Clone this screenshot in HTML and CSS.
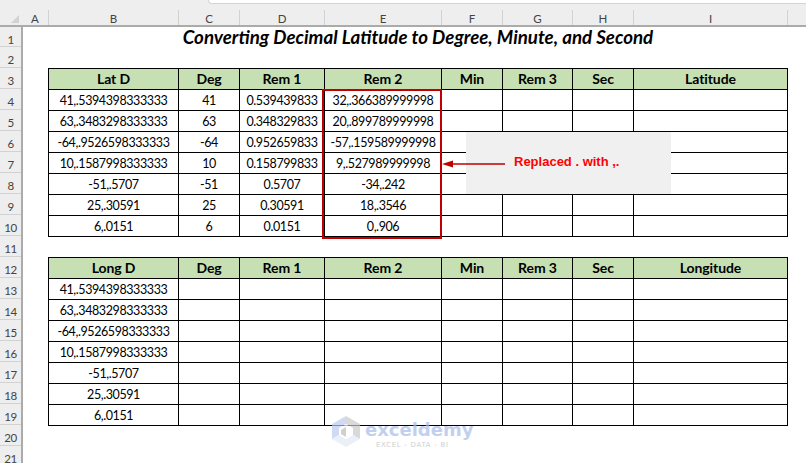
FILE: index.html
```html
<!DOCTYPE html>
<html lang="en">
<head>
<meta charset="utf-8">
<title>Converting Decimal Latitude</title>
<link rel="stylesheet" href="styles.css">
</head>
<body>
<div class="topbar"><div class="formula"></div></div>
<div class="colheads">
  <div class="corner"><svg class="corner-svg" width="22" height="13" viewBox="0 0 22 13"><path class="corner-mark" d="M19 5V13H11Z"/></svg></div>
  <div class="ch a">A</div><div class="ch b">B</div><div class="ch c">C</div><div class="ch d">D</div><div class="ch e">E</div><div class="ch f">F</div><div class="ch g">G</div><div class="ch h">H</div><div class="ch i">I</div>
</div>
<div class="body">
  <div class="rowheads">
    <div class="rh">1</div><div class="rh">2</div><div class="rh">3</div><div class="rh">4</div><div class="rh">5</div><div class="rh">6</div><div class="rh">7</div><div class="rh">8</div><div class="rh">9</div><div class="rh">10</div><div class="rh">11</div><div class="rh">12</div><div class="rh">13</div><div class="rh">14</div><div class="rh">15</div><div class="rh">16</div><div class="rh">17</div><div class="rh">18</div><div class="rh">19</div><div class="rh">20</div><div class="rh">21</div>
  </div>
  <div class="sheet">
    <h1 class="title">Converting Decimal Latitude to Degree, Minute, and Second</h1>
    <table class="data">
      <colgroup><col class="w-b"><col class="w-c"><col class="w-d"><col class="w-e"><col class="w-f"><col class="w-g"><col class="w-h"><col class="w-i"></colgroup>
      <tr class="head"><th>Lat D</th><th>Deg</th><th>Rem 1</th><th>Rem 2</th><th>Min</th><th>Rem 3</th><th>Sec</th><th>Latitude</th></tr>
      <tr><td>41,.5394398333333</td><td>41</td><td>0.539439833</td><td>32,.366389999998</td><td></td><td></td><td></td><td></td></tr>
      <tr><td>63,.3483298333333</td><td>63</td><td>0.348329833</td><td>20,.899789999998</td><td></td><td></td><td></td><td></td></tr>
      <tr><td>-64,.9526598333333</td><td>-64</td><td>0.952659833</td><td>-57,.159589999998</td><td></td><td></td><td></td><td></td></tr>
      <tr><td>10,.1587998333333</td><td>10</td><td>0.158799833</td><td>9,.527989999998</td><td></td><td></td><td></td><td></td></tr>
      <tr><td>-51,.5707</td><td>-51</td><td>0.5707</td><td>-34,.242</td><td></td><td></td><td></td><td></td></tr>
      <tr><td>25,.30591</td><td>25</td><td>0.30591</td><td>18,.3546</td><td></td><td></td><td></td><td></td></tr>
      <tr><td>6,.0151</td><td>6</td><td>0.0151</td><td>0,.906</td><td></td><td></td><td></td><td></td></tr>
    </table>
    <table class="data second">
      <colgroup><col class="w-b"><col class="w-c"><col class="w-d"><col class="w-e"><col class="w-f"><col class="w-g"><col class="w-h"><col class="w-i"></colgroup>
      <tr class="head"><th>Long D</th><th>Deg</th><th>Rem 1</th><th>Rem 2</th><th>Min</th><th>Rem 3</th><th>Sec</th><th>Longitude</th></tr>
      <tr><td>41,.5394398333333</td><td></td><td></td><td></td><td></td><td></td><td></td><td></td></tr>
      <tr><td>63,.3483298333333</td><td></td><td></td><td></td><td></td><td></td><td></td><td></td></tr>
      <tr><td>-64,.9526598333333</td><td></td><td></td><td></td><td></td><td></td><td></td><td></td></tr>
      <tr><td>10,.1587998333333</td><td></td><td></td><td></td><td></td><td></td><td></td><td></td></tr>
      <tr><td>-51,.5707</td><td></td><td></td><td></td><td></td><td></td><td></td><td></td></tr>
      <tr><td>25,.30591</td><td></td><td></td><td></td><td></td><td></td><td></td><td></td></tr>
      <tr><td>6,.0151</td><td></td><td></td><td></td><td></td><td></td><td></td><td></td></tr>
    </table>
    <div class="highlight"></div>
    <div class="callout">Replaced . with ,.</div>
    <svg class="arrow" width="64" height="10" viewBox="0 0 64 10"><path class="arrow-line" d="M8 5H63"/><path class="arrow-head" d="M0 5L11 1.5V8.500Z"/></svg>
    <div class="watermark">
      <svg class="wm-logo" width="28" height="31" viewBox="0 0 28 31">
        <path class="wm-left" d="M14 0L0 8V23L7 19V12L14 8Z"/>
        <path class="wm-right" d="M14 0L28 8V23L21 19V12L14 8Z"/>
        <path class="wm-bottom" d="M0 23L14 31L28 23L21 19L14 23L7 19Z"/>
        <path class="wm-inner" d="M7 12L14 8L21 12V19L14 23L7 19Z"/>
        <path class="wm-notch" d="M9 14L14 11V17L14 21L9 18Z"/>
      </svg>
      <div class="wm-text"><div class="wm-name">exceldemy</div><div class="wm-sub">EXCEL - DATA - BI</div></div>
    </div>
  </div>
</div>
</body>
</html>
```
FILE: styles.css
```css
* { box-sizing: border-box; }
html, body { margin: 0; height: 100%; }
body { width: 806px; height: 463px; overflow: hidden; background: #fff; font-family: Lato, "Liberation Sans", sans-serif; color: #000; }

.topbar { height: 4px; background: #eeeeee; padding-left: 208px; overflow: hidden; }
.formula { height: 4px; background: #fff; border: 1px solid #d4d4d4; border-width: 0 0 1px 1px; border-radius: 0 0 0 5px; }

.colheads { display: flex; height: 23px; padding-top: 6px; background: #eeeeee; border-bottom: 2px solid #ababab; }
.corner { width: 22px; border-right: 1px solid #eeeeee; }
.corner-svg { display: block; }
.corner-mark { fill: #d2d2d2; }
.ch { display: flex; align-items: center; justify-content: center; font-size: 11.500px; color: #444; border-right: 1px solid #d2d2d2; padding-top: 1px; }
.a { width: 27px; }
.b { width: 130px; }
.c { width: 61px; }
.d { width: 85px; }
.e { width: 117px; }
.f { width: 61px; }
.g { width: 70px; }
.h { width: 61px; }
.i { width: 154px; }

.body { display: flex; height: 436px; }
.rowheads { width: 23px; flex: none; background: #eeeeee; border-right: 2px solid #ababab; }
.rh { height: 21px; display: flex; align-items: center; justify-content: center; font-size: 11.500px; letter-spacing: -.5px; color: #444; border-bottom: 1px solid #d2d2d2; padding-top: 5px; }
.rh:first-child { height: 20px; }

.sheet { position: relative; flex: 1; padding-left: 25px; }
.title { margin: 0 0 21px; height: 20px; width: 740px; text-align: center; font-size: 18.700px; line-height: 21px; font-weight: 700; font-style: italic; white-space: nowrap; }

.data { border-collapse: separate; border-spacing: 0; table-layout: fixed; width: 740px; border-top: 1px solid #000; border-left: 1px solid #000; font-size: 12.500px; letter-spacing: -.4px; }
.second { margin-top: 20px; }
.w-b { width: 130px; }
.w-c { width: 61px; }
.w-d { width: 85px; }
.w-e { width: 117px; }
.w-f { width: 61px; }
.w-g { width: 70px; }
.w-h { width: 61px; }
.w-i { width: 154px; }
.data th, .data td { height: 21px; padding: 0; border-right: 1px solid #000; border-bottom: 1px solid #000; text-align: center; white-space: nowrap; overflow: hidden; }
.data td { padding-top: 1px; }
.data th { background: #c6e0b4; font-weight: 700; font-size: 14px; letter-spacing: -.1px; padding-bottom: 1px; }

.highlight { position: absolute; left: 299px; top: 62px; width: 120px; height: 150px; border: 2px solid #c00000; }
.callout { position: absolute; left: 443px; top: 105px; width: 205px; height: 62px; background: #f0f0f0; padding: 22px 0 0 48px; font-family: "Liberation Sans", sans-serif; font-size: 13px; line-height: 16px; font-weight: 700; color: #f00; }
.arrow { position: absolute; left: 419px; top: 132px; }
.arrow-line { stroke: #c00000; stroke-width: 1.500; fill: none; }
.arrow-head { fill: #c00000; }

.watermark { position: absolute; left: 309px; top: 389px; display: flex; gap: 5px; opacity: .7; }
.wm-left { fill: #bccdf0; }
.wm-right { fill: #c9c9c9; }
.wm-bottom { fill: #e2e9f6; }
.wm-inner { fill: #ffffff; }
.wm-notch { fill: #bdbdbd; }
.wm-text { padding-top: 2px; }
.wm-name { font-family: "DejaVu Sans", sans-serif; font-weight: 700; font-size: 18px; line-height: 23px; color: #a9bdea; }
.wm-sub { font-family: "DejaVu Sans", sans-serif; font-size: 7px; line-height: 9px; letter-spacing: .7px; color: #bdbdbd; padding-left: 11px; white-space: nowrap; }
```
